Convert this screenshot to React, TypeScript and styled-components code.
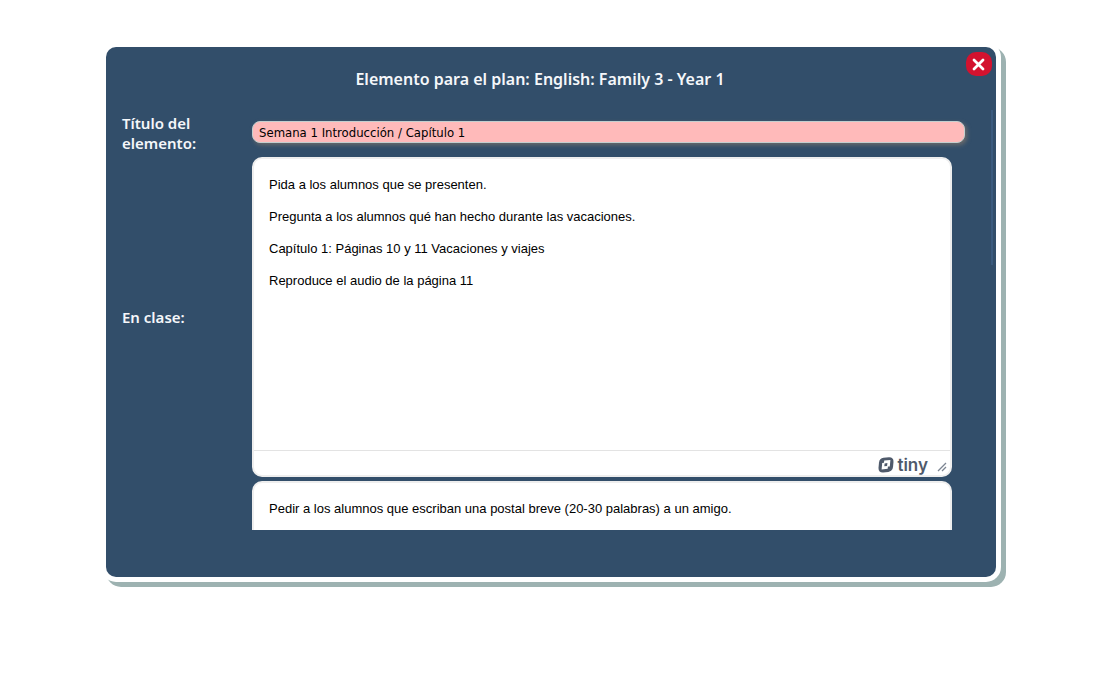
import React from "react";
import styled, { createGlobalStyle } from "styled-components";

const GlobalStyle = createGlobalStyle`
  *, *::before, *::after { box-sizing: border-box; }
  body {
    margin: 0;
    background: #fff;
    font-family: "Noto Sans", sans-serif;
  }
`;

const Page = styled.main`
  padding: 47px 104px 47px 106px;
`;

const Dialog = styled.section`
  position: relative;
  padding: 16px 0 47px;
  border-radius: 10px;
  background: #324e6a;
  box-shadow: 0 0 0 5px #fff, 5px 5px 0 5px #9db2b1;
`;

const Title = styled.h1`
  margin: 0 22px 15px 0;
  font-size: 16px;
  font-weight: 600;
  line-height: 32px;
  text-align: center;
  color: #f5f7fa;
`;

const CloseButton = styled.button`
  position: absolute;
  top: 5px;
  right: 4px;
  display: flex;
  align-items: center;
  justify-content: center;
  width: 26px;
  height: 24px;
  padding: 0;
  border: 0;
  border-radius: 10px;
  background: #d3122f;
  color: #fff;
  cursor: pointer;
`;

const ScrollArea = styled.form`
  position: relative;
  height: 420px;
  padding: 3px 31px 0 16px;
  overflow: hidden;
`;

const ScrollThumb = styled.div`
  position: absolute;
  top: 0;
  right: 3px;
  width: 2px;
  height: 155px;
  background: #3b5b7e;
`;

const Row = styled.div`
  display: grid;
  grid-template-columns: 130px 1fr;
  align-items: center;
  margin-bottom: 4px;
`;

const Label = styled.label`
  max-width: 100px;
  font-size: 15px;
  font-weight: 600;
  line-height: 20px;
  color: #f5f7fa;
`;

const TitleInput = styled.input`
  width: 100%;
  height: 22px;
  margin-bottom: 2px;
  padding: 0 6px;
  border: 1px solid #c3cfcf;
  border-radius: 8px;
  background: #ffbaba;
  box-shadow: 2px 2px 4px #6b6b6b;
  color: #000;
  font: 13px "DejaVu Sans Condensed", "Noto Sans", sans-serif;
`;

const Editor = styled.div`
  display: flex;
  flex-direction: column;
  height: 320px;
  margin-right: 13px;
  overflow: hidden;
  border: 2px solid #eee;
  border-radius: 10px;
  background: #fff;
`;

const EditorText = styled.textarea`
  flex: 1;
  padding: 18px 15px;
  border: 0;
  outline: 0;
  resize: none;
  background: transparent;
  color: #000;
  font: 13px/16px "Liberation Sans", Arial, sans-serif;
`;

const StatusBar = styled.footer`
  display: flex;
  align-items: center;
  justify-content: flex-end;
  height: 25px;
  padding: 3px 3px 0 0;
  border-top: 1px solid #e3e3e3;
  color: #4f5a6b;
`;

const Brand = styled.span`
  margin: 0 9px 0 3px;
  font-family: Inter, sans-serif;
  font-size: 17px;
  font-weight: 600;
  line-height: 20px;
`;

const CloseMark = () => (
  <svg width="14" height="14" viewBox="0 0 14 14" aria-hidden="true">
    <path d="M2 3 11 12M11 3 2 12" stroke="currentColor" strokeWidth="2.8" strokeLinecap="round" />
  </svg>
);

const TinyMark = () => (
  <svg width="16" height="16" viewBox="0 0 16 16" fill="none" aria-hidden="true">
    <path
      d="M5.5 0.8 L11 0.3 Q15.6 0.2 15.5 4.8 L15 10 Q14.4 14.3 10.3 14.9 L5.1 15.4 Q0.5 15.5 0.5 10.9 L1 5.4 Q1.5 1.4 5.5 0.8Z"
      fill="currentColor"
    />
    <path d="M6.2 3.6 12.4 2.9 11.8 9.4 9.9 9.6 9.7 11.7 3.6 12.4 4.2 6 6 5.8Z" fill="#fff" />
    <path d="M6.6 6.4 9.4 6.1 9.1 8.9 6.3 9.2Z" fill="currentColor" />
  </svg>
);

const ResizeGrip = () => (
  <svg width="10" height="14" viewBox="0 0 10 14" aria-hidden="true">
    <path d="M1 13 9 5M5 13 9 9" stroke="#7c8592" strokeWidth="1.3" />
  </svg>
);

type EditorFieldProps = { id: string; label: string; text: string; branded?: boolean };

const RichEditor = ({ id, label, text, branded }: EditorFieldProps) => (
  <Editor>
    <EditorText id={id} aria-label={label} defaultValue={text} spellCheck={false} />
    {branded && (
      <StatusBar>
        <TinyMark />
        <Brand>tiny</Brand>
        <ResizeGrip />
      </StatusBar>
    )}
  </Editor>
);

const classText = [
  "Pida a los alumnos que se presenten.",
  "Pregunta a los alumnos qué han hecho durante las vacaciones.",
  "Capítulo 1: Páginas 10 y 11 Vacaciones y viajes",
  "Reproduce el audio de la página 11",
].join("\n\n");

export default function App() {
  return (
    <>
      <GlobalStyle />
      <Page>
        <Dialog role="dialog" aria-labelledby="dialog-title">
          <Title id="dialog-title">Elemento para el plan: English: Family 3 - Year 1</Title>
          <CloseButton type="button" aria-label="Cerrar">
            <CloseMark />
          </CloseButton>
          <ScrollArea>
            <Row>
              <Label htmlFor="item-title">Título del elemento:</Label>
              <TitleInput id="item-title" defaultValue="Semana 1 Introducción / Capítulo 1" />
            </Row>
            <Row>
              <Label htmlFor="in-class">En clase:</Label>
              <RichEditor id="in-class" label="En clase" text={classText} branded />
            </Row>
            <Row>
              <span />
              <RichEditor
                id="homework"
                label="Deberes"
                text="Pedir a los alumnos que escriban una postal breve (20-30 palabras) a un amigo."
              />
            </Row>
            <ScrollThumb />
          </ScrollArea>
        </Dialog>
      </Page>
    </>
  );
}
